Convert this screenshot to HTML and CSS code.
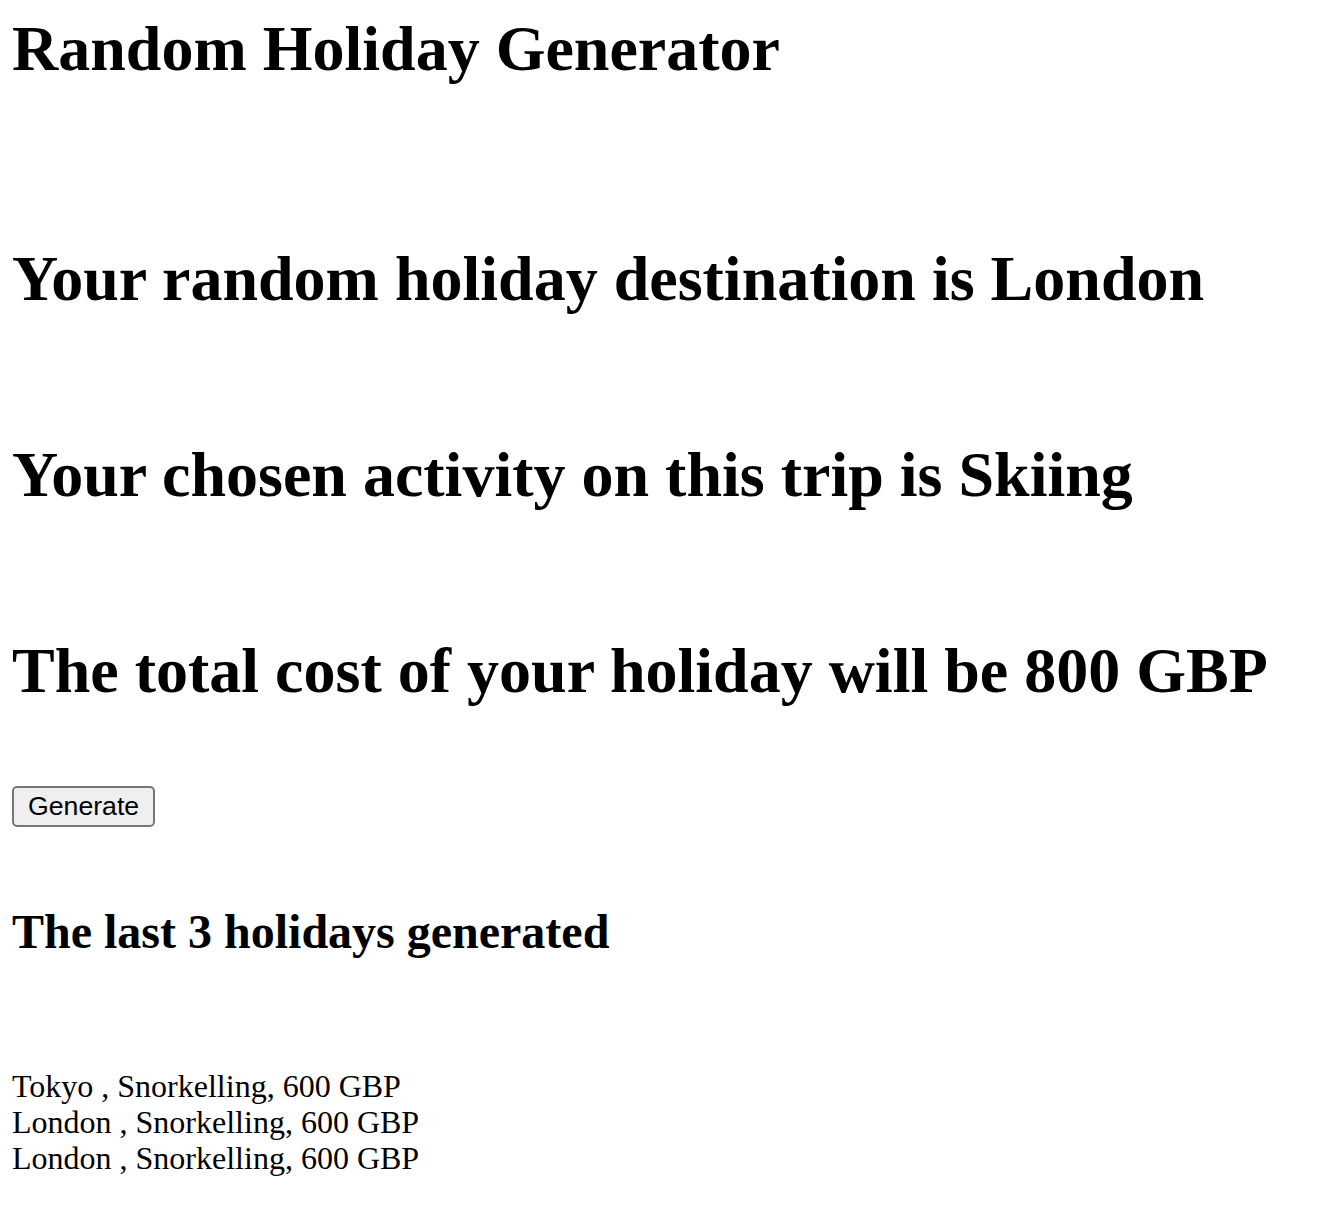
FILE: index.html
```html
<!DOCTYPE html>
<html>
<head>
<meta charset="utf-8">
<title>Random Holiday Generator</title>
<link rel="stylesheet" href="styles.css">
</head>
<body>
<h1 class="title">Random Holiday Generator</h1>
<div class="results">
  <h1 class="result">Your random holiday destination is London</h1>
  <h1 class="result">Your chosen activity on this trip is Skiing</h1>
  <h1 class="result">The total cost of your holiday will be 800 GBP</h1>
</div>
<button class="generate" type="button">Generate</button>
<h2 class="history-title">The last 3 holidays generated</h2>
<div class="history">
  <div class="history-item">Tokyo , Snorkelling, 600 GBP</div>
  <div class="history-item">London , Snorkelling, 600 GBP</div>
  <div class="history-item">London , Snorkelling, 600 GBP</div>
</div>
</body>
</html>
```
FILE: styles.css
```css
html, body {
  background: #ffffff;
}
body {
  margin: 0;
  padding: 0 12px;
  font-family: "Liberation Serif", "Times New Roman", serif;
  font-size: 32px;
  color: #000000;
}
.title {
  margin: 12px 0 0;
  font-size: 64px;
  font-weight: bold;
  line-height: 74px;
}
.results {
  display: flex;
  flex-direction: column;
  gap: 122px;
  padding-top: 156px;
}
.result {
  margin: 0;
  font-size: 64px;
  font-weight: bold;
  line-height: 74px;
  white-space: nowrap;
}
.generate {
  display: block;
  margin-top: 78px;
  height: 41px;
  padding: 0 14px;
  border: 2px solid #767676;
  border-radius: 5px;
  background: #efefef;
  font-family: "Liberation Sans", Arial, sans-serif;
  font-size: 26.67px;
  color: #000000;
}
.history-title {
  margin: 77px 0 0;
  font-size: 48px;
  font-weight: bold;
  line-height: 55px;
}
.history {
  margin-top: 109px;
}
.history-item {
  line-height: 36px;
}
```
